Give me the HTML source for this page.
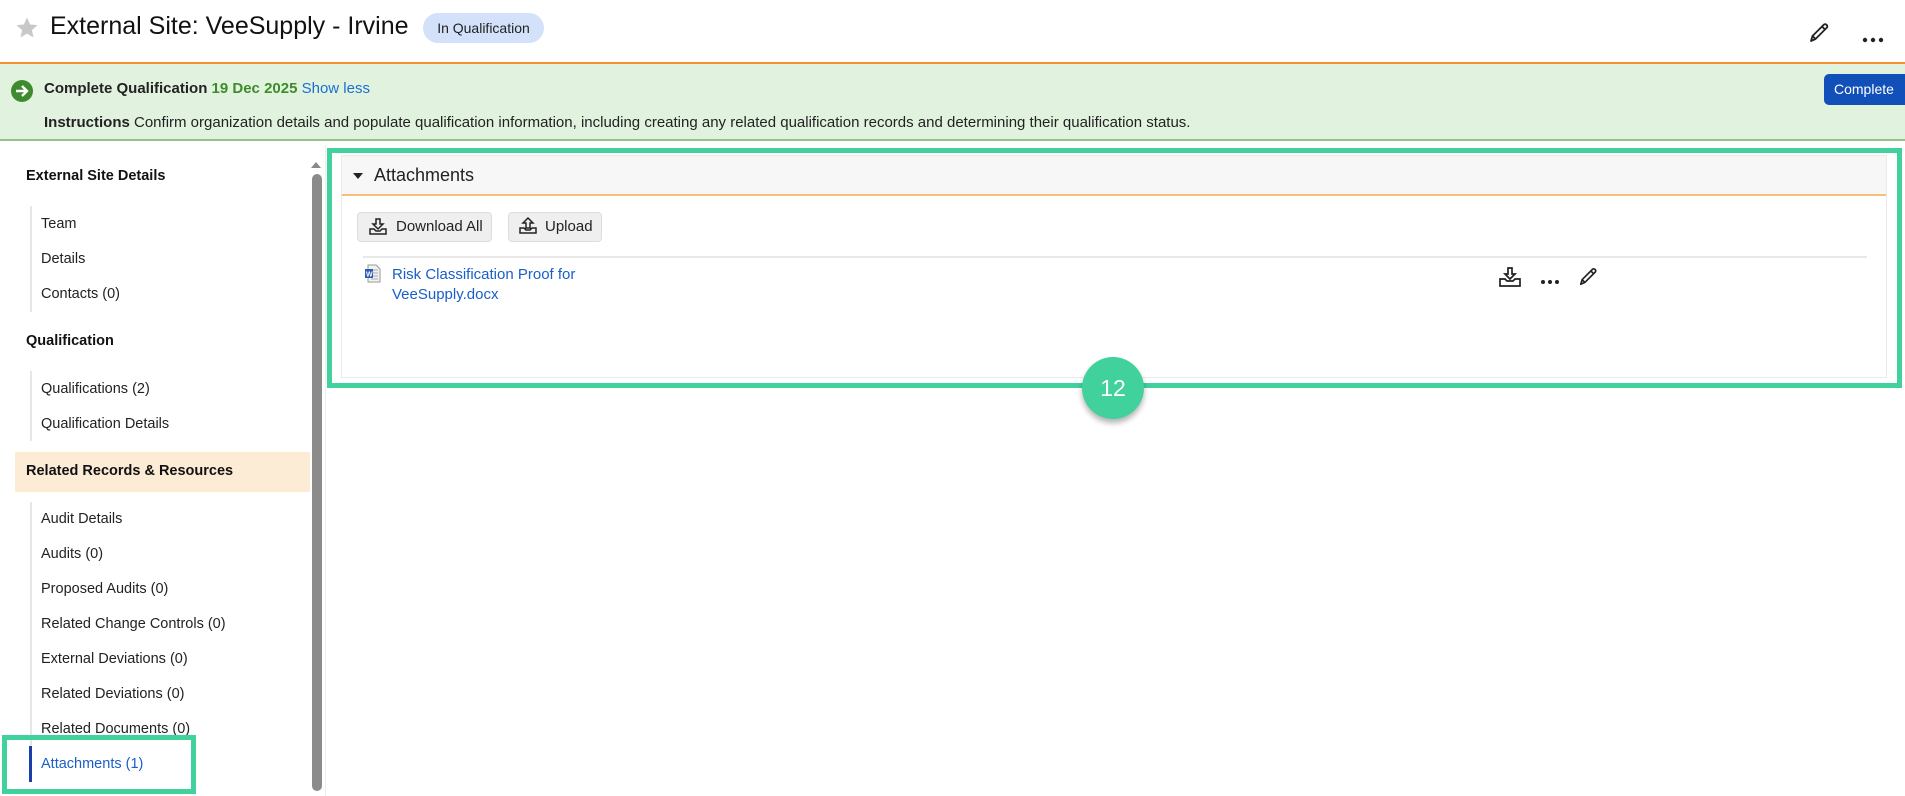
<!DOCTYPE html>
<html><head><meta charset="utf-8"><style>
*{box-sizing:border-box;margin:0;padding:0}
body{width:1905px;height:796px;overflow:hidden;background:#fff;font-family:"Liberation Sans",Arial,sans-serif;color:#222;position:relative}
.a{position:absolute;white-space:nowrap}
.nav{font-size:14.5px;color:#222}
.hd{font-size:14.5px;font-weight:bold;color:#111}
.ico{position:absolute}
</style></head><body>
<!-- header -->
<svg class="ico" style="left:15px;top:16px" width="24" height="24" viewBox="0 0 24 24"><path d="M12 1.5l3.1 7 7.4.6-5.6 5 1.7 7.4L12 17.6l-6.6 3.9 1.7-7.4-5.6-5 7.4-.6z" fill="#c8c8c8"/></svg>
<div class="a" style="left:50px;top:12px;font-size:25px;color:#111">External Site: VeeSupply - Irvine</div>
<div class="a" style="left:423px;top:13px;width:121px;height:30px;border-radius:15px;background:#d3e2fa;font-size:14px;line-height:30px;text-align:center;color:#222">In Qualification</div>
<svg class="ico" style="left:1808px;top:20px" width="24" height="24" viewBox="0 0 24 24" fill="none" stroke="#222" stroke-width="1.8" stroke-linejoin="round"><path d="M3 21l1.5-5L16 4.5a2.2 2.2 0 013 3L7.5 19z M14 6.5l3.5 3.5 M4.5 16l3.5 3.5"/></svg>
<div class="a" style="left:1862px;top:30px"><svg width="22" height="6"><circle cx="3" cy="3" r="2.2" fill="#222"/><circle cx="11" cy="3" r="2.2" fill="#222"/><circle cx="19" cy="3" r="2.2" fill="#222"/></svg></div>
<!-- banner -->
<div class="a" style="left:0;top:62px;width:1905px;height:2px;background:#f0922e"></div>
<div class="a" style="left:0;top:64px;width:1905px;height:77px;background:#e1f3df;border-bottom:2px solid #98c08a"></div>
<svg class="ico" style="left:10px;top:79px" width="24" height="24" viewBox="0 0 24 24"><circle cx="12" cy="12" r="11" fill="#3f8a2f"/><path d="M6 12h10M12 7l5 5-5 5" stroke="#fff" stroke-width="2.4" fill="none"/></svg>
<div class="a" style="left:44px;top:80px;font-size:15px"><b>Complete Qualification</b> <span style="color:#3d8b2a;font-weight:bold">19 Dec 2025</span> <span style="color:#1a6fd0">Show less</span></div>
<div class="a" style="left:44px;top:114px;font-size:15px"><b>Instructions</b> Confirm organization details and populate qualification information, including creating any related qualification records and determining their qualification status.</div>
<div class="a" style="left:1824px;top:74px;width:90px;height:31px;border-radius:5px;background:#1150b8;color:#fff;font-size:14px;line-height:31px;padding-left:10px">Complete</div>
<!-- sidebar -->
<div class="a hd" style="left:26px;top:168px">External Site Details</div>
<div class="a" style="left:30px;top:206px;width:2px;height:106px;background:#e6e6e6"></div>
<div class="a nav" style="left:41px;top:216px">Team</div>
<div class="a nav" style="left:41px;top:251px">Details</div>
<div class="a nav" style="left:41px;top:286px">Contacts (0)</div>
<div class="a hd" style="left:26px;top:333px">Qualification</div>
<div class="a" style="left:30px;top:371px;width:2px;height:70px;background:#e6e6e6"></div>
<div class="a nav" style="left:41px;top:381px">Qualifications (2)</div>
<div class="a nav" style="left:41px;top:416px">Qualification Details</div>
<div class="a" style="left:15px;top:452px;width:295px;height:40px;background:#fdecd5;border-radius:2px"></div>
<div class="a hd" style="left:26px;top:463px">Related Records &amp; Resources</div>
<div class="a" style="left:30px;top:502px;width:2px;height:280px;background:#e6e6e6"></div>
<div class="a nav" style="left:41px;top:511px">Audit Details</div>
<div class="a nav" style="left:41px;top:546px">Audits (0)</div>
<div class="a nav" style="left:41px;top:581px">Proposed Audits (0)</div>
<div class="a nav" style="left:41px;top:616px">Related Change Controls (0)</div>
<div class="a nav" style="left:41px;top:651px">External Deviations (0)</div>
<div class="a nav" style="left:41px;top:686px">Related Deviations (0)</div>
<div class="a nav" style="left:41px;top:721px">Related Documents (0)</div>
<div class="a" style="left:29px;top:746px;width:3px;height:36px;background:#1a3fa8"></div>
<div class="a nav" style="left:41px;top:756px;color:#1a5fc7">Attachments (1)</div>
<div class="a" style="left:2px;top:735px;width:194px;height:59px;border:5px solid #40d19c"></div>
<!-- scrollbar -->
<div class="a" style="left:311px;top:162px;width:0;height:0;border-left:5px solid transparent;border-right:5px solid transparent;border-bottom:6px solid #888"></div>
<div class="a" style="left:312px;top:174px;width:10px;height:617px;background:#8b8b8b;border-radius:5px"></div>
<div class="a" style="left:325px;top:145px;width:1px;height:651px;background:#eee"></div>
<!-- main panel -->
<div class="a" style="left:341px;top:155px;width:1546px;height:223px;border:1px solid #eaeaea;background:#fff"></div>
<div class="a" style="left:342px;top:156px;width:1544px;height:40px;background:#f7f7f7;border-bottom:2px solid #f5c07a"></div>
<div class="a" style="left:353px;top:173px;width:0;height:0;border-left:5px solid transparent;border-right:5px solid transparent;border-top:6px solid #222"></div>
<div class="a" style="left:374px;top:165px;font-size:18px;color:#222">Attachments</div>
<div class="a" style="left:357px;top:212px;width:135px;height:30px;background:#efefef;border:1px solid #ddd;border-radius:4px;font-size:15px;line-height:28px;padding-left:38px">Download All</div>
<svg class="ico" style="left:368px;top:217px" width="20" height="20" viewBox="0 0 20 20" fill="none" stroke="#222" stroke-width="1.5"><path d="M2 12v5h16v-5h-4l-2 2H8l-2-2z M8 2h4v5h3l-5 5-5-5h3z"/></svg>
<div class="a" style="left:508px;top:212px;width:94px;height:30px;background:#efefef;border:1px solid #ddd;border-radius:4px;font-size:15px;line-height:28px;padding-left:36px">Upload</div>
<svg class="ico" style="left:518px;top:216px" width="20" height="20" viewBox="0 0 20 20" fill="none" stroke="#222" stroke-width="1.5"><path d="M2 12v5h16v-5h-4l-2 2H8l-2-2z M8 12h4V7h3l-5-5-5 5h3z"/></svg>
<div class="a" style="left:363px;top:256px;width:1504px;height:2px;background:#e8e8e8"></div>
<svg class="ico" style="left:364px;top:264px" width="17" height="19" viewBox="0 0 17 19"><path d="M4 1h8l4 4v13H4z" fill="#f2f2f2" stroke="#999"/><path d="M7 6h7M7 9h7M7 12h7M7 15h7" stroke="#aaa"/><rect x="1" y="5" width="8" height="9" fill="#2b5fb4"/><text x="2" y="12.5" font-size="7" fill="#fff" font-family="Liberation Sans" font-weight="bold">W</text></svg>
<div class="a" style="left:392px;top:265px;font-size:15px;color:#1a5fc7;line-height:20px">Risk Classification Proof for<br>VeeSupply.docx</div>
<svg class="ico" style="left:1498px;top:266px" width="24" height="22" viewBox="0 0 24 22" fill="none" stroke="#222" stroke-width="1.7"><path d="M2 13v7h20v-7h-5l-2 2H9l-2-2z M10 2h4v6h3l-5 5-5-5h3z"/></svg>
<div class="a" style="left:1540px;top:272px"><svg width="20" height="6"><circle cx="3" cy="3" r="2" fill="#222"/><circle cx="10" cy="3" r="2" fill="#222"/><circle cx="17" cy="3" r="2" fill="#222"/></svg></div>
<svg class="ico" style="left:1578px;top:265px" width="22" height="22" viewBox="0 0 24 24" fill="none" stroke="#222" stroke-width="1.8" stroke-linejoin="round"><path d="M3 21l1.5-5L16 4.5a2.2 2.2 0 013 3L7.5 19z M14 6.5l3.5 3.5 M4.5 16l3.5 3.5"/></svg>
<div class="a" style="left:327px;top:148px;width:1575px;height:240px;border:5px solid #40d19c"></div>
<div class="a" style="left:1082px;top:357px;width:62px;height:62px;border-radius:50%;background:#40d19c;box-shadow:0 4px 6px rgba(0,0,0,.3);color:#fff;font-size:23px;line-height:62px;text-align:center">12</div>
</body></html>
